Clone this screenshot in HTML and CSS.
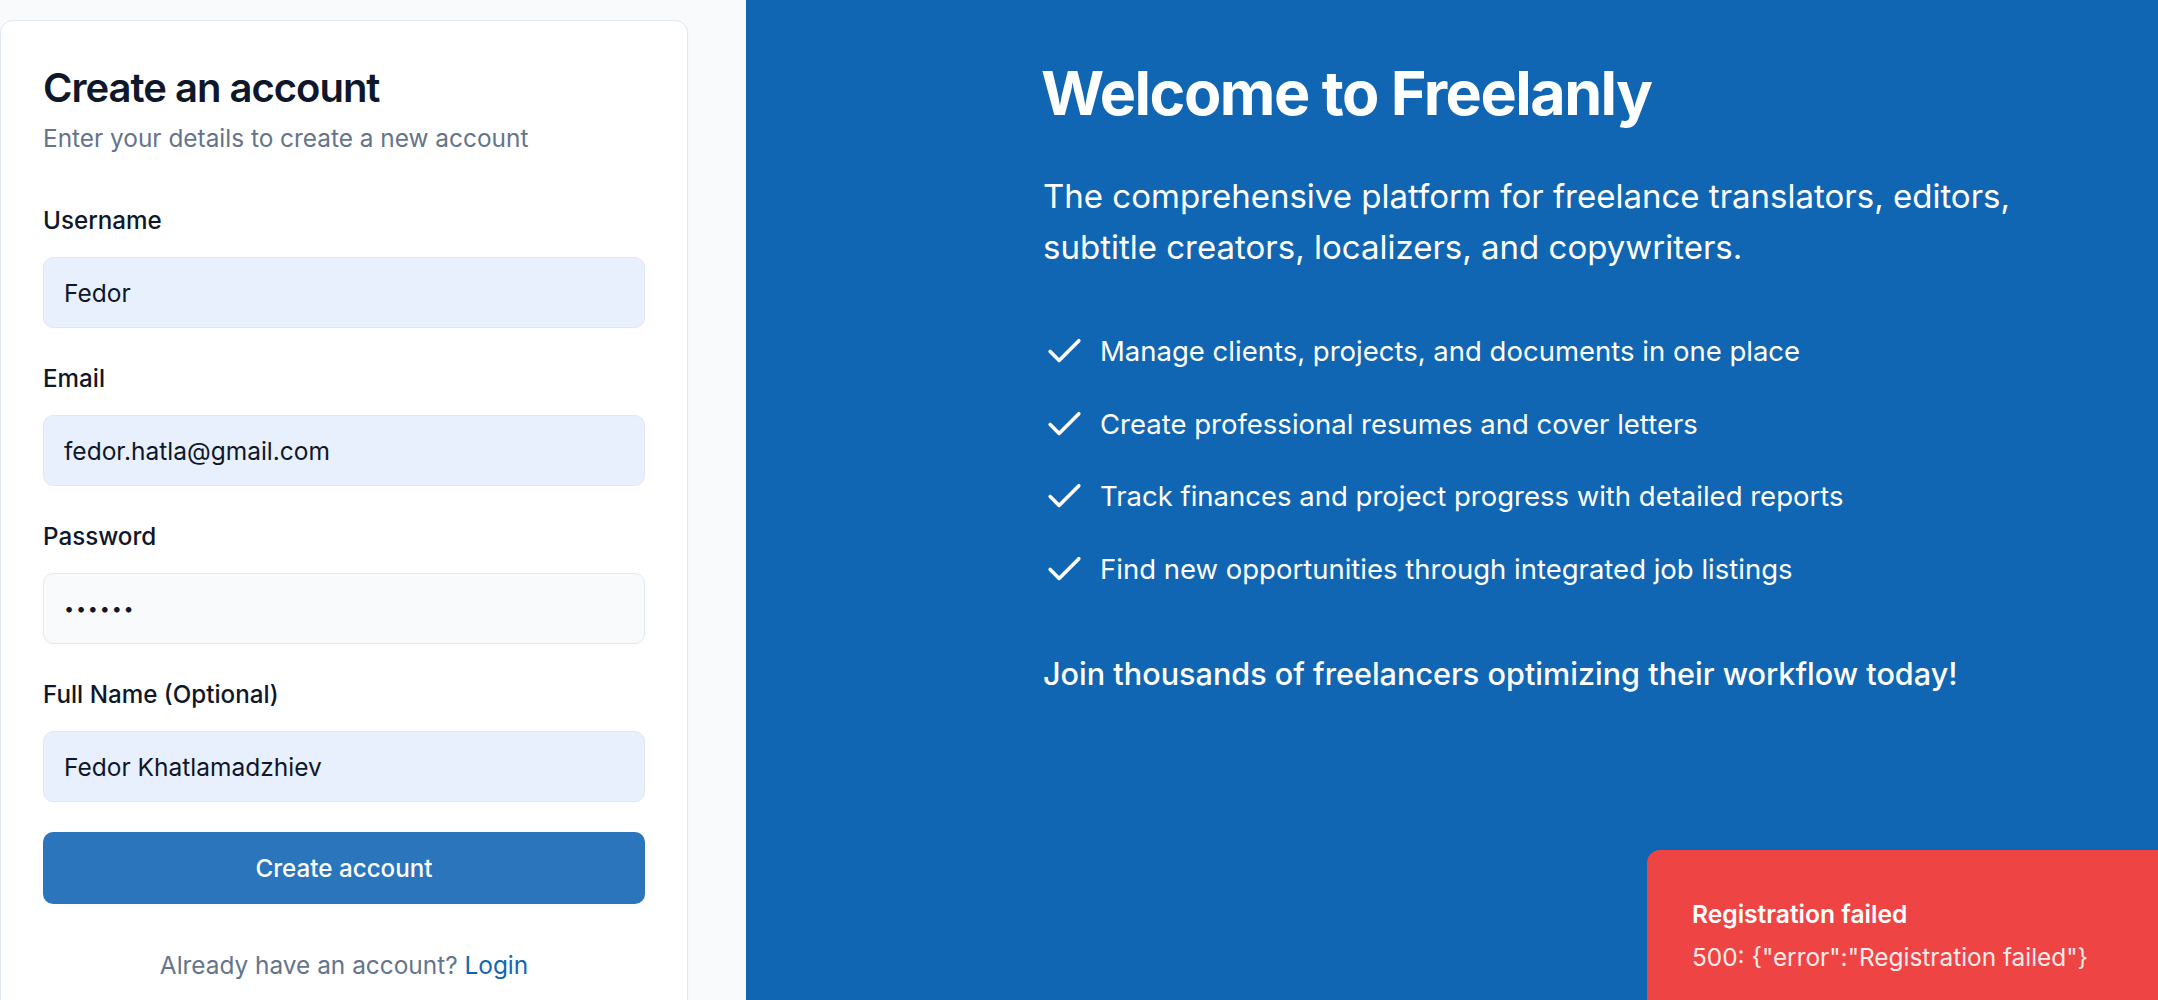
FILE: index.html
```html
<!DOCTYPE html>
<html lang="en">
<head>
<meta charset="utf-8">
<title>Freelanly – Create an account</title>
<link rel="stylesheet" href="styles.css">
</head>
<body>
<div class="page">
  <section class="left">
    <div class="card">
      <h1 class="card-title">Create an account</h1>
      <p class="card-sub">Enter your details to create a new account</p>
      <form class="form">
        <div class="field">
          <label class="label" for="username">Username</label>
          <input class="input autofill" id="username" type="text" value="Fedor">
        </div>
        <div class="field">
          <label class="label" for="email">Email</label>
          <input class="input autofill" id="email" type="email" value="fedor.hatla@gmail.com">
        </div>
        <div class="field">
          <label class="label" for="password">Password</label>
          <input class="input plain secret" id="password" type="password" value="123456">
        </div>
        <div class="field">
          <label class="label" for="fullname">Full Name (Optional)</label>
          <input class="input autofill" id="fullname" type="text" value="Fedor Khatlamadzhiev">
        </div>
        <button class="btn" type="button">Create account</button>
      </form>
      <p class="footer-text">Already have an account? <a class="link" href="#">Login</a></p>
    </div>
  </section>
  <section class="hero">
    <h2 class="hero-title">Welcome to Freelanly</h2>
    <p class="hero-lead">The comprehensive platform for freelance translators, editors, subtitle creators, localizers, and copywriters.</p>
    <ul class="features">
      <li class="feature"><svg class="check" viewBox="0 0 24 24" fill="none" stroke="currentColor" stroke-width="2" stroke-linecap="round" stroke-linejoin="round"><polyline points="20 6 9 17 4 12"/></svg><span>Manage clients, projects, and documents in one place</span></li>
      <li class="feature"><svg class="check" viewBox="0 0 24 24" fill="none" stroke="currentColor" stroke-width="2" stroke-linecap="round" stroke-linejoin="round"><polyline points="20 6 9 17 4 12"/></svg><span>Create professional resumes and cover letters</span></li>
      <li class="feature"><svg class="check" viewBox="0 0 24 24" fill="none" stroke="currentColor" stroke-width="2" stroke-linecap="round" stroke-linejoin="round"><polyline points="20 6 9 17 4 12"/></svg><span>Track finances and project progress with detailed reports</span></li>
      <li class="feature"><svg class="check" viewBox="0 0 24 24" fill="none" stroke="currentColor" stroke-width="2" stroke-linecap="round" stroke-linejoin="round"><polyline points="20 6 9 17 4 12"/></svg><span>Find new opportunities through integrated job listings</span></li>
    </ul>
    <p class="hero-join">Join thousands of freelancers optimizing their workflow today!</p>
  </section>
</div>
<div class="toast" role="alert">
  <div class="toast-title">Registration failed</div>
  <div class="toast-desc">500: {"error":"Registration failed"}</div>
</div>
</body>
</html>
```

FILE: styles.css
```css
* { box-sizing: border-box; }
html, body { margin: 0; padding: 0; height: 100%; }
body {
  font-family: Inter, "Noto Sans", "Liberation Sans", sans-serif;
  color: #0f172a;
  background: #f8fafc;
  overflow: hidden;
}
.page {
  display: grid;
  grid-template-columns: 746px 1fr;
  height: 100vh;
}
.left {
  background: #f8fafc;
  padding-top: 20px;
}
.card {
  width: 688px;
  background: #ffffff;
  border: 1px solid #e2e8f0;
  border-radius: 13px;
  padding: 43px 42px 40px 42px;
  box-shadow: 0 1px 2px rgba(15, 23, 42, 0.04);
}
.card-title {
  margin: 0;
  font-size: 40px;
  line-height: 48px;
  font-weight: 600;
  letter-spacing: -0.025em;
  color: #0f172a;
}
.card-sub {
  margin: 10px 0 0 0;
  font-size: 24.4px;
  line-height: 33px;
  color: #64748b;
}
.form {
  display: flex;
  flex-direction: column;
  gap: 34px;
  margin-top: 49px;
}
.field {
  display: flex;
  flex-direction: column;
  gap: 20px;
}
.label {
  font-size: 24.2px;
  line-height: 33px;
  font-weight: 500;
  color: #0f172a;
}
.input {
  height: 71px;
  width: 100%;
  border: 1px solid #e2e8f0;
  border-radius: 10px;
  padding: 0 20px;
  font-family: inherit;
  font-size: 24.5px;
  color: #0f172a;
  outline: none;
}
.input.autofill { background: #e8f0fe; }
.input.plain { background: #f8fafc; }
.input.secret {
  font-size: 18px;
  letter-spacing: 1.8px;
}
.btn {
  margin-top: -4px;
  height: 72px;
  width: 100%;
  border: none;
  border-radius: 10px;
  background: #2a75bb;
  color: #ffffff;
  font-family: inherit;
  font-size: 24.2px;
  font-weight: 500;
}
.footer-text {
  margin: 45px 0 0 0;
  text-align: center;
  font-size: 24.4px;
  line-height: 33px;
  color: #64748b;
}
.link { color: #1166b3; text-decoration: none; }

.hero {
  background: #1166b3;
  color: #ffffff;
  padding: 63px 40px 0 295px;
}
.hero-title {
  margin: 0;
  font-size: 61px;
  line-height: 60px;
  font-weight: 700;
  letter-spacing: -0.025em;
}
.hero-lead {
  margin: 48px 0 0 2px;
  max-width: 1040px;
  font-size: 33px;
  line-height: 51px;
  font-weight: 400;
}
.features {
  list-style: none;
  margin: 57px 0 0 2px;
  padding: 0;
  display: flex;
  flex-direction: column;
  gap: 29.5px;
}
.feature {
  display: flex;
  align-items: center;
  gap: 14px;
  font-size: 27.5px;
  line-height: 43px;
}
.check {
  width: 43px;
  height: 43px;
  flex: none;
}
.hero-join {
  margin: 60px 0 0 2px;
  font-size: 30.6px;
  line-height: 45px;
  font-weight: 500;
}

.toast {
  position: fixed;
  left: 1647px;
  top: 850px;
  right: -20px;
  bottom: -40px;
  background: #ef4444;
  color: #ffffff;
  border-radius: 13px;
  padding: 47px 40px 0 45px;
}
.toast-title {
  font-size: 24.6px;
  line-height: 34px;
  font-weight: 600;
}
.toast-desc {
  margin-top: 9px;
  font-size: 24.4px;
  line-height: 34px;
  opacity: 0.9;
}
```
